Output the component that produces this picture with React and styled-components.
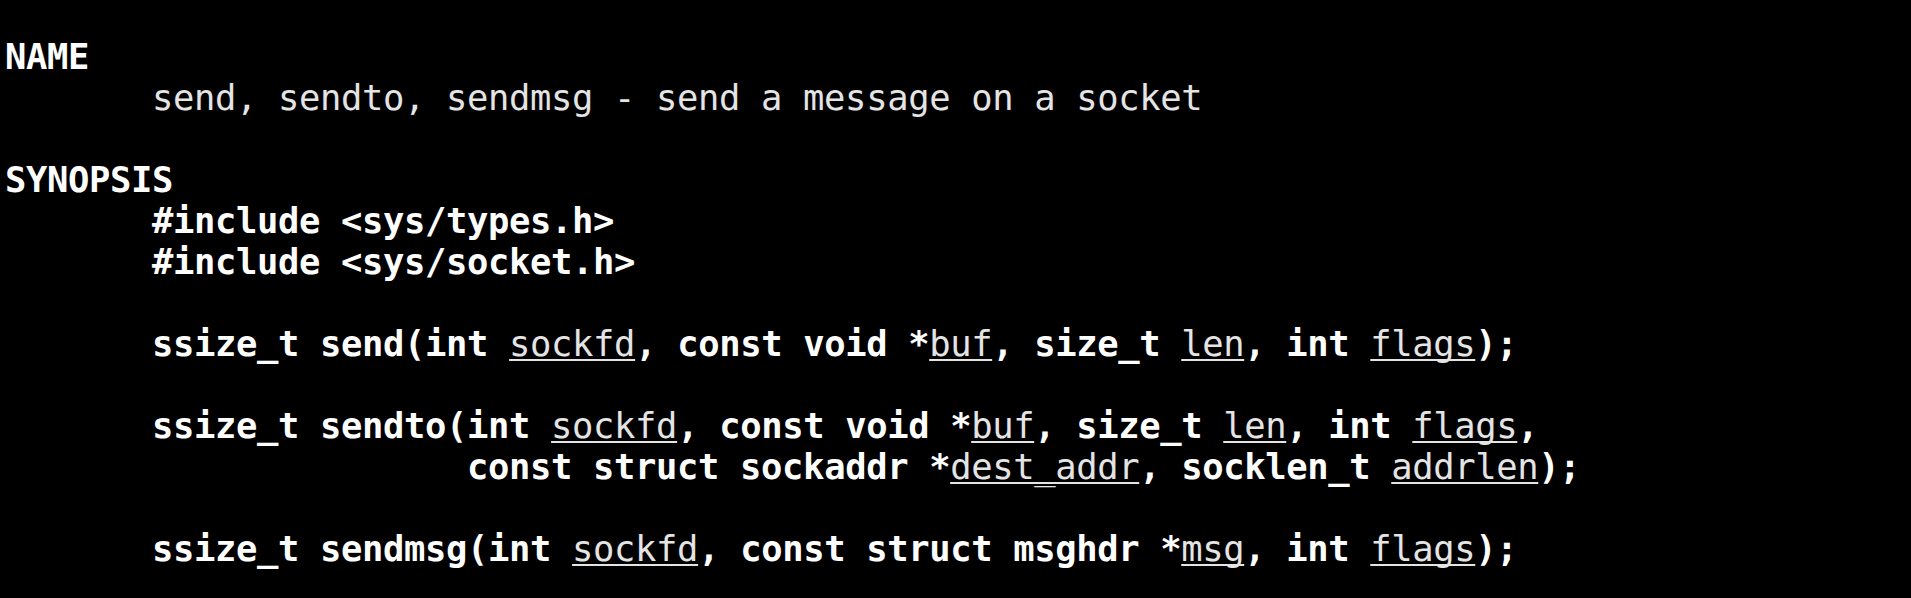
import React from "react";
import styled, { createGlobalStyle } from "styled-components";

const Global = createGlobalStyle`
  html, body { margin: 0; padding: 0; background: #000; }
  #root { min-height: 598px; background: #000; }
`;

const Screen = styled.div`
  background: #000;
  min-height: 598px;
  box-sizing: border-box;
  padding: 36px 0 0 5px;
  font-family: "DejaVu Sans Mono", "Liberation Mono", monospace;
  font-size: 35.5px;
  letter-spacing: -0.37px;
  line-height: 41px;
  color: #e4e4e4;
  white-space: pre;
`;

const Line = styled.div`
  height: 41px;
  font-weight: ${(p) => (p.$bold ? 700 : 400)};
  color: ${(p) => (p.$bold ? "#ffffff" : "#e4e4e4")};
`;

const Arg = styled.span`
  font-weight: 400;
  color: #e4e4e4;
  text-decoration: underline;
  text-decoration-thickness: 2px;
  text-underline-offset: 3px;
  text-decoration-skip-ink: none;
`;

const IND = "       ";

export default function App() {
  return (
    <>
      <Global />
      <Screen>
        <Line $bold>NAME</Line>
        <Line>{IND}send, sendto, sendmsg - send a message on a socket</Line>
        <Line />
        <Line $bold>SYNOPSIS</Line>
        <Line $bold>{IND}#include &lt;sys/types.h&gt;</Line>
        <Line $bold>{IND}#include &lt;sys/socket.h&gt;</Line>
        <Line />
        <Line $bold>
          {IND}ssize_t send(int <Arg>sockfd</Arg>, const void *<Arg>buf</Arg>, size_t{" "}
          <Arg>len</Arg>, int <Arg>flags</Arg>);
        </Line>
        <Line />
        <Line $bold>
          {IND}ssize_t sendto(int <Arg>sockfd</Arg>, const void *<Arg>buf</Arg>, size_t{" "}
          <Arg>len</Arg>, int <Arg>flags</Arg>,
        </Line>
        <Line $bold>
          {IND}{"               "}const struct sockaddr *<Arg>dest_addr</Arg>, socklen_t{" "}
          <Arg>addrlen</Arg>);
        </Line>
        <Line />
        <Line $bold>
          {IND}ssize_t sendmsg(int <Arg>sockfd</Arg>, const struct msghdr *<Arg>msg</Arg>, int{" "}
          <Arg>flags</Arg>);
        </Line>
      </Screen>
    </>
  );
}
